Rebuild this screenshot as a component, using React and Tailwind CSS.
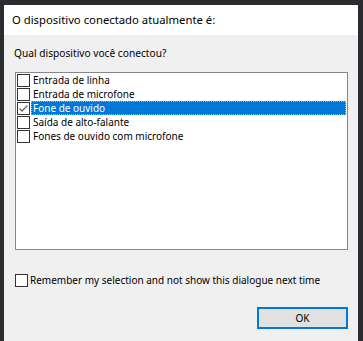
import React from "react";

const items = [
  "Entrada de linha",
  "Entrada de microfone",
  "Fone de ouvido",
  "Saída de alto-falante",
  "Fones de ouvido com microfone",
];

function Box({ checked }) {
  return (
    <div className="w-[13px] h-[13px] shrink-0 border border-[#333] bg-white flex items-center justify-center">
      {checked && (
        <svg width="11" height="11" viewBox="0 0 11 11">
          <polyline points="1.5,5.5 4,8 9.5,2.5" fill="none" stroke="#666" strokeWidth="1.3" />
        </svg>
      )}
    </div>
  );
}

export default function App() {
  const selected = 2;

  return (
    <div
      className="w-[363px] h-[341px] bg-[#2b2c30] pl-[4px] pr-[5px] pt-[5px] flex flex-col text-[10px] text-black"
      style={{ fontFamily: '"Noto Sans", "Open Sans", sans-serif' }}
    >
      <div className="flex-1 flex flex-col bg-[#f0f0f0]">
        <div className="h-[30px] bg-white flex items-center pl-[8px] text-[11.3px] leading-[14px]">
          O dispositivo conectado atualmente é:
        </div>
        <div className="mt-[10px] pl-[10px] h-[16px] flex items-center text-[10.2px] leading-[14px]">
          Qual dispositivo você conectou?
        </div>
        <div className="ml-[11px] mt-[11px] w-[333px] h-[178px] border border-[#828790] bg-white pl-[1px] pr-[1px] flex flex-col">
          {items.map((label, i) => (
            <div key={label} className="h-[14px] flex items-center">
              <Box checked={i === selected} />
              <div
                className={
                  i === selected
                    ? "flex-1 h-[14px] ml-[1px] pl-[1px] bg-[#0078d7] text-white border border-dotted border-[#f0a040] flex items-center leading-[12px] whitespace-nowrap"
                    : "flex-1 h-[14px] ml-[1px] pl-[2px] flex items-center leading-[14px] whitespace-nowrap"
                }
              >
                {label}
              </div>
            </div>
          ))}
        </div>
        <div className="ml-[11px] mt-[23px] flex items-center gap-[2px] h-[14px]">
          <Box />
          <span className="leading-[14px] whitespace-nowrap">
            Remember my selection and not show this dialogue next time
          </span>
        </div>
        <div className="flex justify-end pr-[10px] mt-[20px]">
          <button className="w-[91px] h-[22px] border-2 border-[#0078d7] bg-[#e1e1e1] flex items-center justify-center leading-[14px]">
            OK
          </button>
        </div>
      </div>
    </div>
  );
}
